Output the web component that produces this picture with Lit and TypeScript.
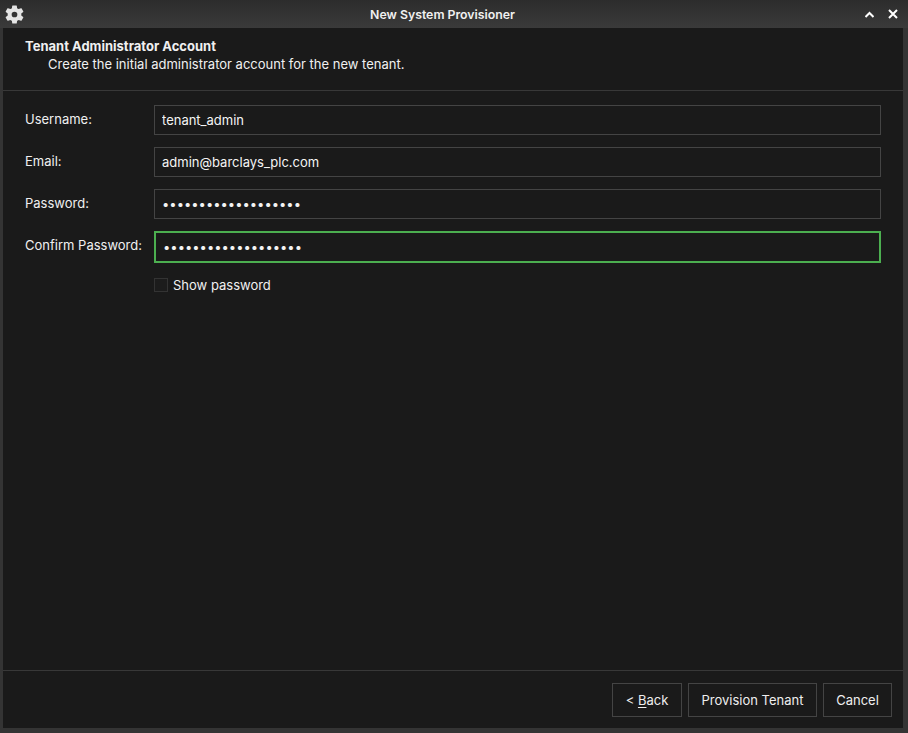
import { LitElement, html, css } from "lit";
import { customElement } from "lit/decorators.js";

const FIELDS = [
  { label: "Username:", type: "text", value: "tenant_admin", focused: false },
  { label: "Email:", type: "text", value: "admin@barclays_plc.com", focused: false },
  { label: "Password:", type: "password", value: "1234567890123456789", focused: false },
  { label: "Confirm Password:", type: "password", value: "1234567890123456789", focused: true },
];

@customElement("app-root")
export class AppRoot extends LitElement {
  static styles = css`
    :host {
      display: block;
      width: 908px;
      height: 733px;
      font-family: Inter, "Liberation Sans", sans-serif;
      font-size: 13px;
      color: #f0f0f0;
    }
    .window {
      display: flex;
      flex-direction: column;
      box-sizing: border-box;
      height: 100%;
      padding: 0 5px 5px 3px;
      background: #343434;
    }
    .titlebar {
      display: flex;
      align-items: center;
      flex: none;
      height: 28px;
      margin: 0 -5px 0 -3px;
      padding: 0 10px 0 5px;
      background: linear-gradient(#2c2c2c, #3a3a3a);
      font-size: 12.3px;
      font-weight: 600;
    }
    .gear {
      display: block;
      flex: none;
      width: 19px;
      height: 19px;
      fill: #e4e4e4;
    }
    .name {
      flex: 1;
      text-align: center;
    }
    .controls {
      display: flex;
      align-items: center;
      gap: 14px;
      margin-left: 4px;
    }
    .controls svg {
      display: block;
      fill: none;
      stroke: #fff;
      stroke-width: 2;
    }
    .content {
      display: flex;
      flex-direction: column;
      flex: 1;
      min-height: 0;
      background: #1a1a1a;
    }
    .header {
      flex: none;
      box-sizing: border-box;
      height: 63px;
      padding: 10px 22px 0;
      border-bottom: 1px solid #383838;
      line-height: 17px;
    }
    .title {
      font-weight: 700;
    }
    .subtitle {
      margin-top: 1px;
      padding-left: 23px;
    }
    .form {
      flex: 1;
      display: grid;
      grid-template-columns: 129px 727px;
      grid-auto-rows: 30px;
      row-gap: 12px;
      align-content: start;
      padding: 14px 22px 0;
    }
    label {
      line-height: 29px;
    }
    input[type="text"],
    input[type="password"] {
      box-sizing: border-box;
      width: 100%;
      height: 30px;
      margin: 0;
      padding: 0 7px;
      border: 1px solid #444;
      border-radius: 0;
      outline: none;
      background: #1a1a1a;
      color: #f4f4f4;
      font: inherit;
    }
    input.focused {
      height: 32px;
      padding: 0 6px 0 7px;
      border: 2px solid #4caf50;
    }
    .check {
      grid-column: 2;
      display: flex;
      align-items: center;
      gap: 5px;
      margin-top: 2px;
      height: 20px;
    }
    .box {
      box-sizing: border-box;
      width: 14px;
      height: 14px;
      border: 1px solid #333;
      background: #1c1c1c;
    }
    .footer {
      flex: none;
      display: flex;
      justify-content: flex-end;
      gap: 6px;
      box-sizing: border-box;
      height: 58px;
      padding: 12px 11px 0 0;
      border-top: 1px solid #383838;
    }
    button {
      box-sizing: border-box;
      height: 34px;
      padding: 0;
      border: 1px solid #444;
      background: #1a1a1a;
      color: #eee;
      font: inherit;
    }
    .back {
      width: 70px;
    }
    .provision {
      width: 129px;
    }
    .cancel {
      width: 69px;
    }
    u {
      text-underline-offset: 2px;
    }
  `;

  render() {
    return html`<div class="window">
      <div class="titlebar">
        <svg class="gear" viewBox="2 2 20 20">
          <path
            fill-rule="evenodd"
            d="M19.14 12.94a7.5 7.5 0 0 0 .06-.94 7.5 7.5 0 0 0-.06-.94l2.03-1.58a.5.5 0 0 0 .12-.61l-1.92-3.32a.5.5 0 0 0-.59-.22l-2.39.96a7 7 0 0 0-1.62-.94l-.36-2.54a.5.5 0 0 0-.49-.41h-3.84a.5.5 0 0 0-.48.41l-.36 2.54a7.4 7.4 0 0 0-1.62.94l-2.39-.96a.5.5 0 0 0-.59.22L2.72 8.87a.5.5 0 0 0 .12.61l2.03 1.58a7.7 7.7 0 0 0 0 1.88l-2.03 1.58a.5.5 0 0 0-.12.61l1.92 3.32c.12.22.37.29.59.22l2.39-.96c.5.38 1.04.7 1.62.94l.36 2.54c.05.24.24.41.48.41h3.84c.24 0 .44-.17.47-.41l.36-2.54a7 7 0 0 0 1.62-.94l2.39.96c.22.08.47 0 .59-.22l1.92-3.32a.5.5 0 0 0-.12-.61zM12 15a3 3 0 1 1 0-6 3 3 0 0 1 0 6z"
          />
        </svg>
        <span class="name">New System Provisioner</span>
        <div class="controls">
          <svg width="9" height="7" viewBox="0 0 9 7"><path d="M.5 6l4-4 4 4" /></svg>
          <svg width="10" height="10" viewBox="0 0 10 10"><path d="M1 1l8 8M9 1l-8 8" /></svg>
        </div>
      </div>
      <div class="content">
        <div class="header">
          <div class="title">Tenant Administrator Account</div>
          <div class="subtitle">Create the initial administrator account for the new tenant.</div>
        </div>
        <div class="form">
          ${FIELDS.map(
            (f) => html`<label>${f.label}</label>
              <input class=${f.focused ? "focused" : ""} type=${f.type} .value=${f.value} />`
          )}
          <div class="check">
            <span class="box"></span>
            <span>Show password</span>
          </div>
        </div>
        <div class="footer">
          <button class="back">&lt; <u>B</u>ack</button>
          <button class="provision">Provision Tenant</button>
          <button class="cancel">Cancel</button>
        </div>
      </div>
    </div>`;
  }
}
